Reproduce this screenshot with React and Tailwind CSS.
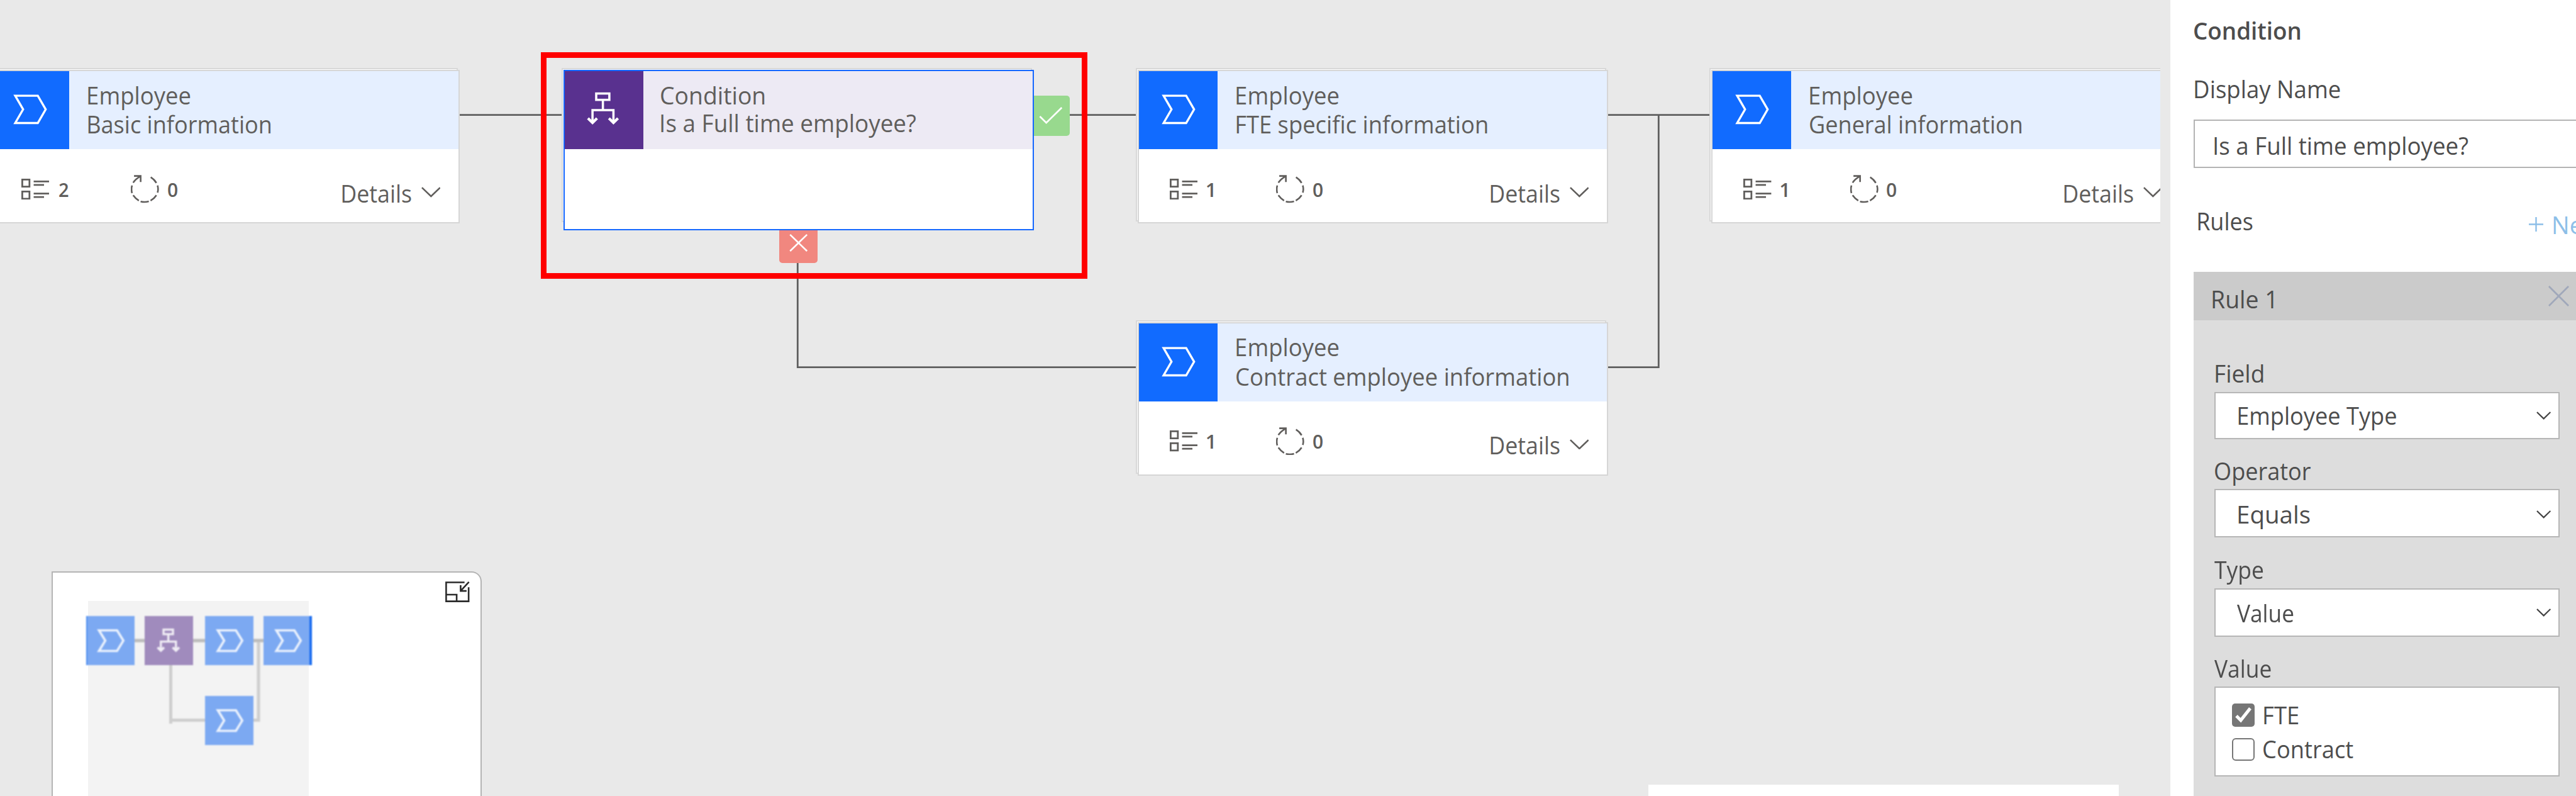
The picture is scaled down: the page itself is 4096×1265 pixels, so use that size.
import { useLayoutEffect, useState } from "react";

const FONT = '"Open Sans", "Noto Sans", sans-serif';

/* Text whose visible ink fills exactly `w` pixels. */
function Fit({ children, w, size = 38, weight = 400, h = 40, className = "" }) {
  const [t, setT] = useState("none");
  useLayoutEffect(() => {
    const ctx = document.createElement("canvas").getContext("2d");
    ctx.font = `${weight} ${size}px ${FONT}`;
    const m = ctx.measureText(children);
    const ink = m.actualBoundingBoxRight + m.actualBoundingBoxLeft;
    const s = w / ink;
    setT(`translateX(${m.actualBoundingBoxLeft * s}px) scaleX(${s})`);
  }, [children, w, size, weight]);
  return (
    <div className={`shrink-0 whitespace-pre ${className}`} style={{ width: w, height: h, lineHeight: `${h}px`, fontSize: size, fontWeight: weight }}>
      <span className="inline-block origin-left" style={{ transform: t }}>{children}</span>
    </div>
  );
}

const StageIcon = ({ className, stroke = 3.6 }) => (
  <svg viewBox="0 0 134 133" preserveAspectRatio="none" className={className} fill="none" stroke="white" strokeWidth={stroke}>
    <path d="M42 42H80.5L94 65.2L80.5 88.5H42L55.5 65.2Z" />
  </svg>
);

const ConditionIcon = ({ className, stroke = 3.8 }) => (
  <svg viewBox="0 0 134 133" preserveAspectRatio="none" className={className} fill="none" stroke="white" strokeWidth={stroke}>
    <rect x="53.6" y="38.2" width="22.4" height="10.8" />
    <path d="M65 49V66.6M47.3 88V66.6H83V88" />
    <path d="M39.6 80.5L47.3 88L55 80.5M75.3 80.5L83 88L90.7 80.5" strokeWidth={stroke + 0.8} />
  </svg>
);

const ListIcon = () => (
  <svg viewBox="0 0 48 36" className="h-[33.5px] w-[44.7px] shrink-0" fill="none" stroke="#605e5c" strokeWidth="3">
    <path d="M1.5 1.5H13.8V13.5H1.5ZM1.5 22H13.8V34.2H1.5Z" />
    <path d="M21 4.7H47.7M21 10.5H38.7M21 25.4H47.7M21 31.2H38.7" />
  </svg>
);

const LoopIcon = () => (
  <svg viewBox="0 0 48 48" className="h-[44.7px] w-[44.7px] shrink-0" fill="none" stroke="#605e5c" strokeWidth="2.8">
    <path d="M5.5 1.8H16.8V12M4 13.3Q8 7 16.3 2.3" />
    <path d="M34 4Q40 7.5 43.7 13.7M45.6 18Q47.5 24 45.7 30.3M43.7 34.7Q40 40.5 33.7 44M16.7 45.3Q23.7 47.2 30.7 45.2M4 34.7Q8 40.5 13.7 44M2.1 18Q.3 24.5 2.1 31" />
  </svg>
);

function Card({ pos, nameW, name, count, countW, shift = "ml-[14.5px]", gap = "w-[214.5px]", rest = "ml-[266.5px]" }) {
  return (
    <div className={`absolute h-[244px] w-[748px] ${pos}`}>
      <div className="absolute -top-[3px] -left-[3px] h-[244px] w-[748px] border-2 border-[#d8d8d8] bg-white" />
      <div className="relative h-full w-full border-2 border-[#d6d6d6] bg-white">
        <div className="flex h-[124px] bg-[#e5efff]">
          <div className="h-full w-[125px] shrink-0 bg-[#116bff]"><StageIcon className="h-[124px] w-[125px]" /></div>
          <div className="flex flex-col gap-[6.5px] pt-[17.5px] pl-[30px]">
            <Fit w={162.6}>Employee</Fit>
            <Fit w={nameW}>{name}</Fit>
          </div>
        </div>
        <div className="flex items-start pl-[49px]">
          <div className={`flex items-start pt-[46.5px] ${gap}`}>
            <ListIcon />
            <Fit w={countW} size={31} h={32} weight={600} className={`mt-[1.3px] ${shift}`}>{count}</Fit>
            <div className="-mt-[5.5px] ml-auto"><LoopIcon /></div>
          </div>
          <Fit w={15.5} size={31} h={32} weight={600} className="mt-[47.8px] ml-[13.5px]">0</Fit>
          <Fit w={110} className={`mt-[49.5px] ${rest}`}>Details</Fit>
          <svg viewBox="0 0 33 18" className="mt-[60px] ml-[16px] h-[16.8px] w-[30.7px] shrink-0" fill="none" stroke="#605e5c" strokeWidth="2.8"><path d="M1 1.2L16.5 16L32 1.2" /></svg>
        </div>
      </div>
    </div>
  );
}

function Select({ children, w, h, pad }) {
  return (
    <div className={`flex w-[549.5px] items-start justify-between border-[2.5px] border-[#b6b6b6] bg-white pr-[12px] ${h} ${pad}`}>
      <Fit w={w}>{children}</Fit>
      <svg viewBox="0 0 25 14" className="mt-[13.5px] h-[13px] w-[23.3px]" fill="none" stroke="#444" strokeWidth="2.4"><path d="M1 1L12.5 12.2L24 1" /></svg>
    </div>
  );
}

const Tile = ({ pos, bg, children }) => <div className={`absolute h-[77.5px] w-[77px] ${pos} ${bg}`}>{children}</div>;

const MiniStage = ({ className = "-ml-[11px]" }) => <StageIcon stroke={5} className={`-mt-[7px] h-[94px] w-[100px] opacity-85 ${className}`} />;

export default function App() {
  return (
    <div className="flex h-[1265px] w-[4096px] overflow-hidden bg-[#e9e9e9]" style={{ fontFamily: FONT }}>
      <main className="relative h-full w-[3451px] shrink-0 text-[#605e5c]">
        <div className="relative h-full w-[3435px] overflow-hidden">
          <svg className="absolute inset-0 h-[1265px] w-[3435px]" fill="none" stroke="#5f5f5f" strokeWidth="2.8">
            <path d="M728 182.6H896M1700 182.6H1806M1268.3 410V583.7H1806M2556 182.6H2719M2556 583.7H2637.3V182.6" />
          </svg>
          <Card pos="left-[-17.5px] top-[111px]" name="Basic information" nameW={290.7} count="2" countW={15} gap="w-[219.5px]" rest="ml-[261.5px]" shift="ml-[15.5px]" />
          <Card pos="left-[1808.5px] top-[111px]" name="FTE specific information" nameW={399} count="1" countW={10} />
          <Card pos="left-[2721px] top-[111px]" name="General information" nameW={336.7} count="1" countW={10} />
          <Card pos="left-[1808.5px] top-[511.5px]" name="Contract employee information" nameW={528.5} count="1" countW={10} />

          <div className="absolute top-[151.7px] left-[1643px] h-[64px] w-[58px] rounded-r-[5px] bg-[#98d98e]">
            <svg viewBox="0 0 62 69" className="h-full w-full" fill="none" stroke="white" strokeWidth="3"><path d="M11 35.5L22 46.5L48.5 20.5" /></svg>
          </div>
          <div className="absolute top-[365px] left-[1239.3px] h-[53px] w-[60.5px] rounded-b-[5px] bg-[#f1877f]">
            <svg viewBox="0 0 65 57" className="h-full w-full" fill="none" stroke="white" strokeWidth="2.8"><path d="M18.5 8.5L47.5 36.5M47.5 8.5L18.5 36.5" /></svg>
          </div>
          <div className="absolute top-[111px] left-[896px] h-[255px] w-[748px]">
            <div className="absolute -top-[3px] -left-[3px] h-[245px] w-[748px] border-2 border-[#d8d8d8] bg-white" />
            <div className="relative h-full w-full border-[2.5px] border-[#1467ff] bg-white">
              <div className="flex h-[124px] bg-[#edeaf4]">
                <div className="h-full w-[125px] shrink-0 bg-[#59318f]"><ConditionIcon className="h-[124px] w-[125px]" /></div>
                <div className="flex flex-col gap-[4.5px] pt-[17.5px] pl-[28px]">
                  <Fit w={165}>Condition</Fit>
                  <Fit w={405.6}>Is a Full time employee?</Fit>
                </div>
              </div>
            </div>
          </div>
          <div className="absolute top-[83px] left-[860.3px] h-[360px] w-[868.7px] border-[9px] border-[#ff0000]" />

          <div className="absolute top-[907.5px] left-[81.5px] h-[400px] w-[684.5px] rounded-tr-[16px] border-2 border-[#b4b4b4] bg-white">
            <svg viewBox="0 0 42 36" className="absolute top-[14.5px] right-[17.5px] h-[33.5px] w-[39px]" fill="none" stroke="#2b2b2b" strokeWidth="2.8">
              <path d="M33 1.5H1.5V34H40V10M1.5 22.5H19.5V34M40.5 1L26.5 16M26.3 6.5V16.3H36.5" />
            </svg>
          </div>
          <div className="absolute top-[955px] left-[140px] h-[310px] w-[351px] bg-[#f3f3f3]" />
          <div className="absolute inset-0 blur-[0.8px]">
            <svg className="absolute inset-0 h-[1265px] w-[600px]" fill="none" stroke="#cecece" strokeWidth="5">
              <path d="M214 1018H420M271.5 1056V1150M271.5 1144.5H326M402 1144.5H411V1018" />
              <path d="M214 1018H230M307 1018H326M403 1018H419" stroke="#bdbdbd" />
            </svg>
            <Tile pos="left-[137px] top-[979px]" bg="bg-[#7ca9f2] border-l-2 border-[#4f8ff0]"><MiniStage className="-ml-[13px]" /></Tile>
            <Tile pos="left-[229.7px] top-[979px]" bg="bg-[#a08bbd]"><ConditionIcon stroke={5} className="-mt-[4.3px] -ml-[6px] h-[89px] w-[90px] opacity-85" /></Tile>
            <Tile pos="left-[325.7px] top-[979px]" bg="bg-[#7ca9f2]"><MiniStage /></Tile>
            <Tile pos="left-[418.5px] top-[979px]" bg="bg-[#7ca9f2] border-r-4 border-[#1b6df0]"><MiniStage /></Tile>
            <Tile pos="left-[325.7px] top-[1106px]" bg="bg-[#7ca9f2]"><MiniStage /></Tile>
          </div>
          <div className="absolute top-[1246.5px] left-[2621px] h-[40px] w-[748px] bg-white" />
        </div>
      </main>

      <aside className="h-full flex-1 overflow-hidden bg-white pt-[27.5px] pl-[37px] text-[#4d4d4d]">
        <Fit w={168.8} weight={600} className="ml-px">Condition</Fit>
        <Fit w={231} className="mt-[53.9px] ml-[2px]">Display Name</Fit>
        <div className="mt-[28.8px] h-[77px] w-[700px] border-[2.5px] border-[#b3b3b3] pt-[18.5px] pl-[30.5px]">
          <Fit w={403.6}>Is a Full time employee?</Fit>
        </div>
        <div className="mt-[63.5px] flex h-[40px] w-[700px] items-start pl-[7.4px]">
          <Fit w={86.8}>Rules</Fit>
          <svg viewBox="0 0 25 25" className="mt-[14.5px] ml-[439px] h-[23px] w-[23px] shrink-0" fill="none" stroke="#8dbfe8" strokeWidth="2.6"><path d="M0 12.5H25M12.5 0V25" /></svg>
          <Fit w={76} className="mt-[6.5px] ml-[15.7px] text-[#8dbfe8]">New</Fit>
        </div>
        <section className="mt-[61.7px] h-[900px] w-[700px] bg-[#dddddd]">
          <div className="flex h-[76.7px] items-start bg-[#cbcbcb] pt-[22px] pl-[29.5px]">
            <Fit w={97} className="mt-[0.5px]">Rule 1</Fit>
            <svg viewBox="0 0 35 35" className="ml-[437px] h-[33px] w-[33px] shrink-0" fill="none" stroke="#a0a8ba" strokeWidth="2.9"><path d="M1 1L34 34M34 1L1 34" /></svg>
          </div>
          <div className="pt-[63.5px] pl-[32.7px]">
            <Fit w={75.2} className="ml-[2.5px]">Field</Fit>
            <div className="mt-[10.1px]"><Select w={251.3} h="h-[75.7px]" pad="pt-[15.4px] pl-[36px]">Employee Type</Select></div>
            <Fit w={152} className="mt-[30px] ml-px">Operator</Fit>
            <div className="mt-[9.1px]"><Select w={114} h="h-[77px]" pad="pt-[17.8px] pl-[36px]">Equals</Select></div>
            <Fit w={77.7} className="mt-[30.2px]">Type</Fit>
            <div className="mt-[10px]"><Select w={89.7} h="h-[77px]" pad="pt-[17.3px] pl-[34px]">Value</Select></div>
            <Fit w={90} className="mt-[30.4px]">Value</Fit>
            <div className="mt-[8.7px] flex h-[143.4px] w-[549.5px] flex-col gap-[18.5px] border-[2.5px] border-[#b6b6b6] bg-white pt-[25.5px] pl-[26.5px]">
              <div className="flex h-[36.3px] items-start">
                <div className="h-[36.3px] w-[36px] rounded-[5px] bg-[#767676]">
                  <svg viewBox="0 0 36 36" className="h-full w-full" fill="none" stroke="white" strokeWidth="5"><path d="M7 19.5L14 26.5L29 7.5" /></svg>
                </div>
                <Fit w={54.3} className="-mt-[2.7px] ml-[14.7px]">FTE</Fit>
              </div>
              <div className="flex h-[36.3px] items-start">
                <div className="h-[36.3px] w-[36px] rounded-[6px] border-[2.8px] border-[#767676]" />
                <Fit w={142.7} className="-mt-[2.7px] ml-[13.6px]">Contract</Fit>
              </div>
            </div>
          </div>
        </section>
      </aside>
    </div>
  );
}
